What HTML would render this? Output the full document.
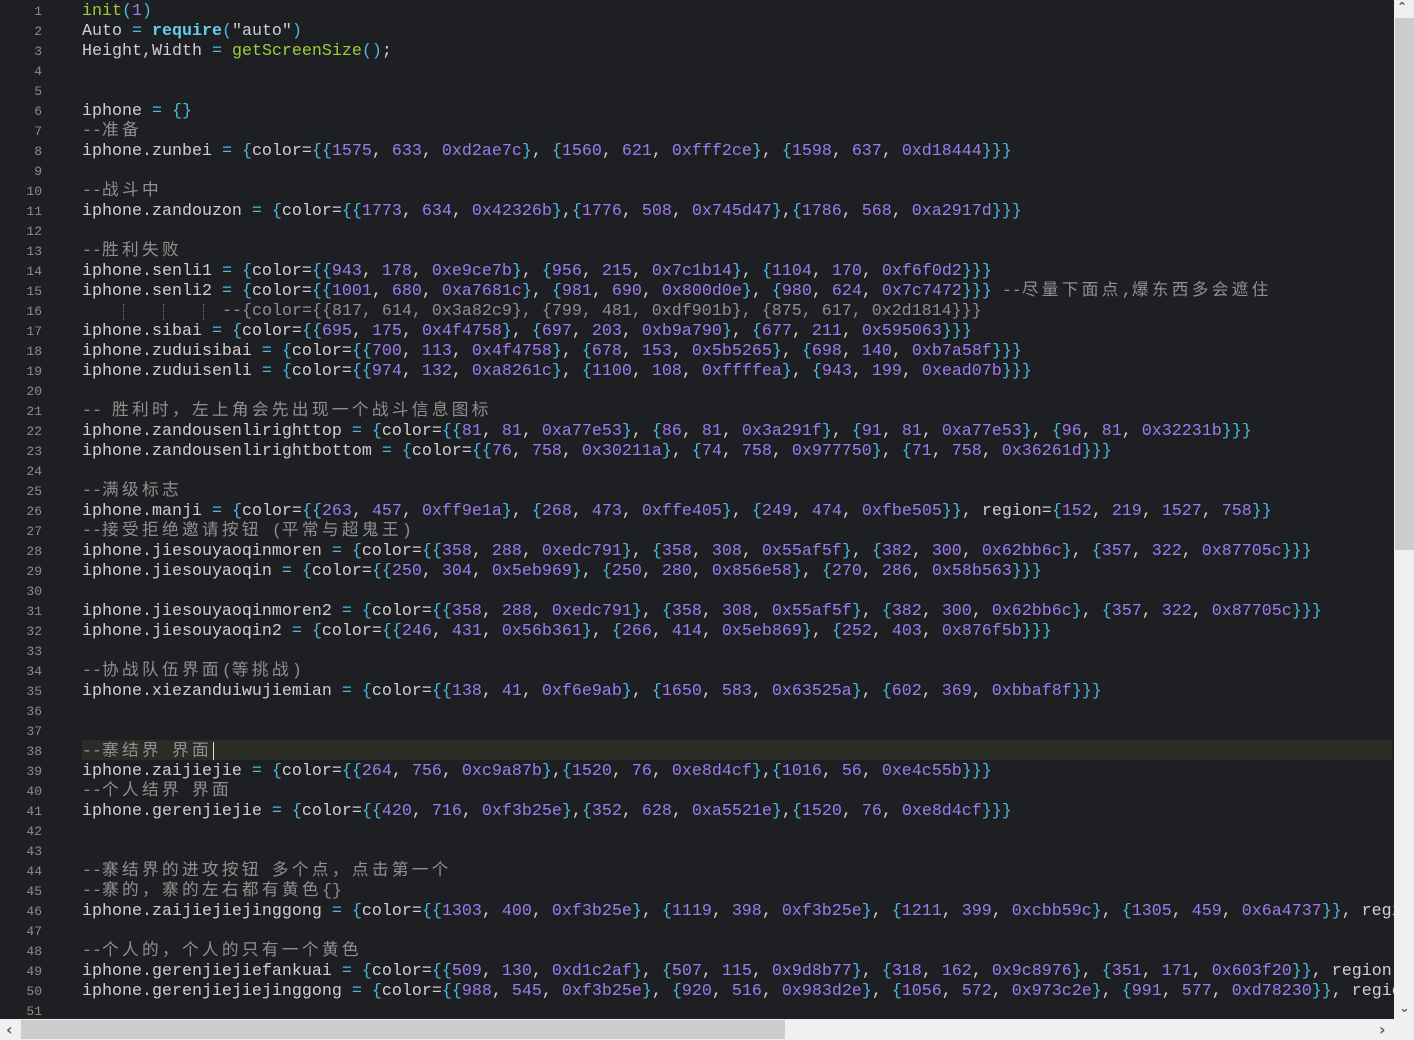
<!DOCTYPE html>
<html><head><meta charset="utf-8">
<style>
html,body{margin:0;padding:0;}
body{width:1414px;height:1040px;background:#1e1f22;overflow:hidden;position:relative;font-family:"Liberation Mono","Noto Sans CJK SC",monospace;}
#ed{position:absolute;left:0;top:0;width:1394px;height:1019px;overflow:hidden;}
.l{position:absolute;left:0;height:20px;line-height:20px;width:1394px;white-space:pre;}
.g{position:absolute;left:0;width:42px;text-align:right;color:#8c8c8c;font-size:13px;}
.t{position:absolute;left:82px;color:#cfcfcf;font-size:16.67px;}
.cur{background:#2a2c26;left:82px;width:1310px;}
.c{color:#8f8f8f}
.z{letter-spacing:3.33px}
.n{color:#9d7cf0}
.o{color:#4fb8e0}
.f{color:#9ad03a}
.k{color:#5fd0e8;font-weight:bold}
.dg{position:absolute;top:2px;height:16px;border-left:1px dotted #777;}
#vs{position:absolute;left:1394px;top:0;width:20px;height:1019px;background:#f0f0f0;}
#vt{position:absolute;left:1395px;top:18px;width:19px;height:532px;background:#cdcdcd;}
#hs{position:absolute;left:0;top:1019px;width:1414px;height:21px;background:#f0f0f0;}
#ht{position:absolute;left:21px;top:1020px;width:764px;height:19px;background:#cdcdcd;}
.ar{position:absolute;color:#606060;font-family:"DejaVu Sans",sans-serif;font-size:16px;font-weight:bold;line-height:16px;}
</style></head><body>
<div id="ed">
<div id="code">
<div class="x">init(1)</div>
<div class="x">Auto = require("auto")</div>
<div class="x">Height,Width = getScreenSize();</div>
<div class="x"></div>
<div class="x"></div>
<div class="x">iphone = {}</div>
<div class="x">--准备</div>
<div class="x">iphone.zunbei = {color={{1575, 633, 0xd2ae7c}, {1560, 621, 0xfff2ce}, {1598, 637, 0xd18444}}}</div>
<div class="x"></div>
<div class="x">--战斗中</div>
<div class="x">iphone.zandouzon = {color={{1773, 634, 0x42326b},{1776, 508, 0x745d47},{1786, 568, 0xa2917d}}}</div>
<div class="x"></div>
<div class="x">--胜利失败</div>
<div class="x">iphone.senli1 = {color={{943, 178, 0xe9ce7b}, {956, 215, 0x7c1b14}, {1104, 170, 0xf6f0d2}}}</div>
<div class="x">iphone.senli2 = {color={{1001, 680, 0xa7681c}, {981, 690, 0x800d0e}, {980, 624, 0x7c7472}}} --尽量下面点,爆东西多会遮住</div>
<div class="x">              --{color={{817, 614, 0x3a82c9}, {799, 481, 0xdf901b}, {875, 617, 0x2d1814}}}</div>
<div class="x">iphone.sibai = {color={{695, 175, 0x4f4758}, {697, 203, 0xb9a790}, {677, 211, 0x595063}}}</div>
<div class="x">iphone.zuduisibai = {color={{700, 113, 0x4f4758}, {678, 153, 0x5b5265}, {698, 140, 0xb7a58f}}}</div>
<div class="x">iphone.zuduisenli = {color={{974, 132, 0xa8261c}, {1100, 108, 0xffffea}, {943, 199, 0xead07b}}}</div>
<div class="x"></div>
<div class="x">-- 胜利时，左上角会先出现一个战斗信息图标</div>
<div class="x">iphone.zandousenlirighttop = {color={{81, 81, 0xa77e53}, {86, 81, 0x3a291f}, {91, 81, 0xa77e53}, {96, 81, 0x32231b}}}</div>
<div class="x">iphone.zandousenlirightbottom = {color={{76, 758, 0x30211a}, {74, 758, 0x977750}, {71, 758, 0x36261d}}}</div>
<div class="x"></div>
<div class="x">--满级标志</div>
<div class="x">iphone.manji = {color={{263, 457, 0xff9e1a}, {268, 473, 0xffe405}, {249, 474, 0xfbe505}}, region={152, 219, 1527, 758}}</div>
<div class="x">--接受拒绝邀请按钮 (平常与超鬼王)</div>
<div class="x">iphone.jiesouyaoqinmoren = {color={{358, 288, 0xedc791}, {358, 308, 0x55af5f}, {382, 300, 0x62bb6c}, {357, 322, 0x87705c}}}</div>
<div class="x">iphone.jiesouyaoqin = {color={{250, 304, 0x5eb969}, {250, 280, 0x856e58}, {270, 286, 0x58b563}}}</div>
<div class="x"></div>
<div class="x">iphone.jiesouyaoqinmoren2 = {color={{358, 288, 0xedc791}, {358, 308, 0x55af5f}, {382, 300, 0x62bb6c}, {357, 322, 0x87705c}}}</div>
<div class="x">iphone.jiesouyaoqin2 = {color={{246, 431, 0x56b361}, {266, 414, 0x5eb869}, {252, 403, 0x876f5b}}}</div>
<div class="x"></div>
<div class="x">--协战队伍界面(等挑战)</div>
<div class="x">iphone.xiezanduiwujiemian = {color={{138, 41, 0xf6e9ab}, {1650, 583, 0x63525a}, {602, 369, 0xbbaf8f}}}</div>
<div class="x"></div>
<div class="x"></div>
<div class="x">--寨结界 界面</div>
<div class="x">iphone.zaijiejie = {color={{264, 756, 0xc9a87b},{1520, 76, 0xe8d4cf},{1016, 56, 0xe4c55b}}}</div>
<div class="x">--个人结界 界面</div>
<div class="x">iphone.gerenjiejie = {color={{420, 716, 0xf3b25e},{352, 628, 0xa5521e},{1520, 76, 0xe8d4cf}}}</div>
<div class="x"></div>
<div class="x"></div>
<div class="x">--寨结界的进攻按钮 多个点，点击第一个</div>
<div class="x">--寨的，寨的左右都有黄色{}</div>
<div class="x">iphone.zaijiejiejinggong = {color={{1303, 400, 0xf3b25e}, {1119, 398, 0xf3b25e}, {1211, 399, 0xcbb59c}, {1305, 459, 0x6a4737}}, region</div>
<div class="x"></div>
<div class="x">--个人的，个人的只有一个黄色</div>
<div class="x">iphone.gerenjiejiefankuai = {color={{509, 130, 0xd1c2af}, {507, 115, 0x9d8b77}, {318, 162, 0x9c8976}, {351, 171, 0x603f20}}, region</div>
<div class="x">iphone.gerenjiejiejinggong = {color={{988, 545, 0xf3b25e}, {920, 516, 0x983d2e}, {1056, 572, 0x973c2e}, {991, 577, 0xd78230}}, region</div>
<div class="x"></div>
</div>
</div>
<div id="vs"></div><div id="vt"></div>
<div id="hs"></div><div id="ht"></div>
<div class="ar" style="left:1398px;top:2px;">&#710;</div>
<div class="ar" style="left:1399px;top:1001px;font-size:13px;">&#8964;</div>
<div class="ar" style="left:6px;top:1022px;">&#8249;</div>
<div class="ar" style="left:1379px;top:1022px;">&#8250;</div>
<script>
(function(){
var rows=document.querySelectorAll('#code .x');
var ed=document.getElementById('ed');
function esc(s){return s.replace(/&/g,'&amp;').replace(/</g,'&lt;');}
function cjk(s){return s.replace(/([\u3000-\u9fff\uff00-\uffef]+)/g,'<span class="z">$1</span>');}
function hl(s){
  var ci=s.indexOf('--');
  var code=ci>=0?s.slice(0,ci):s, com=ci>=0?s.slice(ci):'';
  var h=esc(code);
  h=h.replace(/(0x[0-9a-f]+|(?<![A-Za-z0-9_])\d+)|([{}()])|( = )|\b(require)\b|\b(init|getScreenSize)\b/g,function(m,n,b,o,k,f){
    if(n)return '<span class="n">'+n+'</span>';
    if(b)return '<span class="o">'+b+'</span>';
    if(o)return ' <span class="o">=</span> ';
    if(k)return '<span class="k">'+k+'</span>';
    if(f)return '<span class="f">'+f+'</span>';
    return m;});
  if(com)h+='<span class="c">'+cjk(esc(com))+'</span>';
  return h;
}
var html='';
for(var i=0;i<rows.length;i++){
  var s=rows[i].textContent;
  var top=i*20+2;
  if(i==37)html+='<div class="l cur" style="top:'+(top-2)+'px"></div>';
  html+='<div class="l" style="top:'+top+'px"><span class="g">'+(i+1)+'</span>';
  if(i==15){
    html+='<span class="dg" style="left:123px"></span><span class="dg" style="left:163px"></span><span class="dg" style="left:203px"></span>';
    html+='<span class="t" style="left:222px"><span class="c">'+esc(s.trim())+'</span></span>';
  } else {
    html+='<span class="t">'+hl(s)+(i==37?'<span style="border-left:1px solid #ddd;margin-left:1px;display:inline-block;height:18px;vertical-align:middle;"></span>':'')+'</span>';
  }
  html+='</div>';
}
ed.innerHTML=html;
})();
</script>
</body></html>
